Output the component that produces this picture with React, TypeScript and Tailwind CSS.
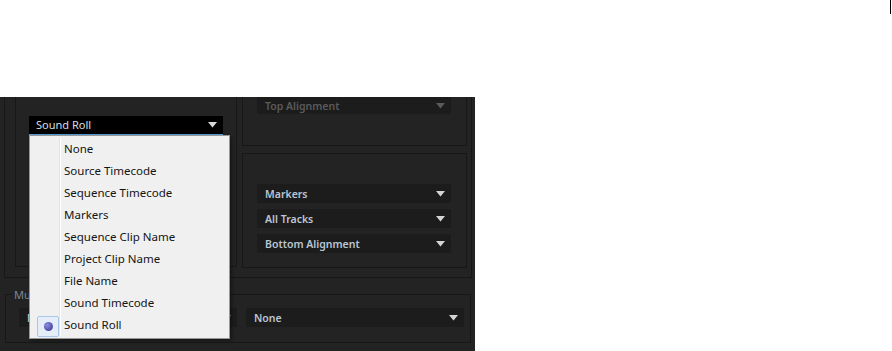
import React from "react";

type DarkSelectProps = {
  label: string;
  width: string;
  disabled?: boolean;
  className?: string;
  textClip?: string;
};

function Caret({ color }: { color: string }) {
  return (
    <svg width="9" height="6" viewBox="0 0 9 6" className="shrink-0">
      <path d="M0 0 H9 L4.5 5.5 Z" fill={color} />
    </svg>
  );
}

function DarkSelect({ label, width, disabled, className, textClip }: DarkSelectProps) {
  return (
    <div
      className={`flex h-[19px] items-center justify-between bg-[#1c1c1c] pl-[8px] pr-[6px] ${width} ${className ?? ""}`}
    >
      <span
        className={`whitespace-nowrap text-[10.5px] font-semibold leading-[14px] ${
          disabled ? "text-[#5a5a5a]" : "text-[#bac6d4]"
        } ${textClip ?? ""}`}
      >
        {label}
      </span>
      <Caret color={disabled ? "#5a5a5a" : "#d4d4d4"} />
    </div>
  );
}

const items = [
  "None",
  "Source Timecode",
  "Sequence Timecode",
  "Markers",
  "Sequence Clip Name",
  "Project Clip Name",
  "File Name",
  "Sound Timecode",
  "Sound Roll",
];

function Popup() {
  return (
    <div className="absolute left-[29px] top-[38px] w-[201px] border border-[#979797] bg-[#f0f0f0] py-[2px] shadow-[2px_2px_3px_rgba(0,0,0,0.35)]">
      <div className="absolute bottom-[2px] left-[29px] top-[2px] w-px bg-[#e2e3e3]" />
      <div className="absolute bottom-[2px] left-[30px] top-[2px] w-px bg-white" />
      {items.map((item) => {
        const selected = item === "Sound Roll";
        return (
          <div key={item} className="relative flex h-[22px] items-center">
            <div className="flex w-[34px] justify-center pl-[2px]">
              {selected && (
                <div className="mt-[3px] flex h-[21px] w-[22px] items-center justify-center rounded-[2px] border border-[#a8c6e8] bg-[#e4edf8]">
                  <div className="h-[9px] w-[9px] rounded-full bg-[radial-gradient(circle_at_35%_35%,#8c8ce0,#30308a)]" />
                </div>
              )}
            </div>
            <span className="whitespace-nowrap text-[11.5px] leading-[16px] text-[#141414]">
              {item}
            </span>
          </div>
        );
      })}
    </div>
  );
}

export default function App() {
  return (
    <div
      className="h-[351px] w-[892px] overflow-hidden bg-white"
      style={{ fontFamily: '"Noto Sans", "Open Sans", Arial, sans-serif' }}
    >
      <div className="flex h-[14px] justify-end pr-[1px]">
        <div className="h-[14px] w-px bg-black" />
      </div>

      <div className="relative mt-[83px] h-[254px] w-[475px] overflow-hidden bg-[#232323]">
        {/* upper frame */}
        <div className="ml-[4px] flex h-[181px] w-[468px] border-x border-b border-[#171717] pl-[10px]">
          {/* left group */}
          <div className="h-[170px] w-[222px] border-x border-b border-[#171717] pl-[13px] pt-[19px]">
            <div className="flex h-[19px] w-[194px] items-center justify-between border-b border-[#4f9ad6] bg-black pl-[7px] pr-[6px]">
              <span className="text-[11px] leading-[14px] text-[#d8dde3]">
                Sound Roll
              </span>
              <Caret color="#d8d8d8" />
            </div>
          </div>

          {/* right column */}
          <div className="ml-[5px] flex w-[225px] flex-col">
            <div className="h-[49px] border-x border-b border-[#171717] pl-[14px]">
              <DarkSelect
                label="Top Alignment"
                width="w-[194px]"
                disabled
                className="!h-[17px]"
              />
            </div>
            <div className="mt-[7px] flex h-[115px] flex-col gap-[6px] border border-[#171717] pl-[14px] pt-[30px]">
              <DarkSelect label="Markers" width="w-[194px]" />
              <DarkSelect label="All Tracks" width="w-[194px]" />
              <DarkSelect label="Bottom Alignment" width="w-[194px]" />
            </div>
          </div>
        </div>

        {/* multi-camera group */}
        <div className="relative ml-[5px] mt-[16px] h-[49px] w-[466px] border border-[#171717] pl-[13px] pt-[13px]">
          <span className="absolute -top-[8px] left-[6px] w-[18px] overflow-hidden whitespace-nowrap bg-[#232323] px-[2px] text-[11px] leading-[16px] text-[#7c8898]">
            Multi-Camera Overlay
          </span>
          <div className="flex gap-[9px]">
            <DarkSelect
              label="None"
              width="w-[218px]"
              textClip="w-[3px] shrink-0 overflow-hidden"
            />
            <DarkSelect label="None" width="w-[218px]" />
          </div>
        </div>

        <Popup />
      </div>
    </div>
  );
}
